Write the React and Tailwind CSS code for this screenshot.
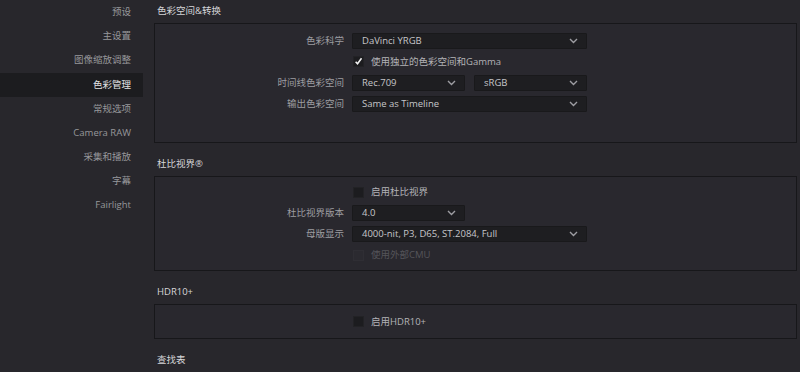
import React from 'react'

const FONT = { fontFamily: '"Open Sans", "Noto Sans CJK SC", sans-serif' }

const NAV = ['预设', '主设置', '图像缩放调整', '色彩管理', '常规选项', 'Camera RAW', '采集和播放', '字幕', 'Fairlight']

function Chevron() {
  return (
    <svg width="9" height="6" viewBox="0 0 9 6" className="shrink-0">
      <path d="M1 1 L4.5 4.5 L8 1" fill="none" stroke="#9d9da2" strokeWidth="1.4" />
    </svg>
  )
}

function Select({ value, w = 'w-[235px]' }) {
  return (
    <div className={`${w} h-[16px] flex items-center justify-between pl-[9px] pr-[8px] bg-[#1e1e21] border border-[#19191b] rounded-[1px] text-[9.5px] text-[#c6c6c9]`}>
      <span className="leading-none">{value}</span>
      <Chevron />
    </div>
  )
}

function Check({ checked, label, disabled }) {
  return (
    <div className="flex items-center h-[16px] pl-[1px]">
      <div className={`w-[11px] h-[11px] flex items-center justify-center border ${disabled ? 'bg-[#2b2a30] border-[#2f2e34]' : 'bg-[#1c1c1f] border-[#222225]'}`}>
        {checked && (
          <svg width="11" height="11" viewBox="0 0 11 11">
            <path d="M2 5.8 L4.3 8.3 L9.2 1.6" fill="none" stroke="#f2f2f2" strokeWidth="1.9" />
          </svg>
        )}
      </div>
      <span className={`ml-[7px] text-[9.5px] leading-none ${disabled ? 'text-[#55555a]' : 'text-[#b3b3b7]'}`}>{label}</span>
    </div>
  )
}

function Row({ label, children }) {
  return (
    <div className="grid grid-cols-[189px_1fr] gap-x-[8px] items-center h-[16px]">
      <div className="text-right text-[9.5px] leading-none text-[#9d9da1]">{label}</div>
      <div className="flex gap-x-[9px]">{children}</div>
    </div>
  )
}

function Title({ children, first }) {
  return (
    <div className={`${first ? 'h-[23px]' : 'mt-[5px] h-[28px]'} flex items-end pb-[6px] pl-[3px] text-[9.5px] leading-[13px] text-[#d6d6d9]`}>
      {children}
    </div>
  )
}

export default function App() {
  return (
    <div style={FONT} className="flex w-[800px] h-[372px] overflow-hidden bg-[#28272c]">
      {/* Sidebar */}
      <div className="w-[143px] shrink-0 flex flex-col">
        {NAV.map(item => (
          <div
            key={item}
            className={[
              'h-[24.2px] flex items-center justify-end pr-[12px] text-[9.5px]',
              item === '色彩管理' ? 'bg-[#1c1c1f] text-[#e4e4e6]' : 'text-[#97979b]',
            ].join(' ')}
          >
            {item}
          </div>
        ))}
      </div>

      {/* Content */}
      <div className="flex-1 pl-[11px] pr-[3px] flex flex-col">
        <Title first>色彩空间&amp;转换</Title>
        <div className="h-[121px] border border-[#17171a] bg-[#29282e] pt-[9px] flex flex-col gap-y-[5px]">
          <Row label="色彩科学"><Select value="DaVinci YRGB" /></Row>
          <Row label=""><Check checked label="使用独立的色彩空间和Gamma" /></Row>
          <Row label="时间线色彩空间">
            <Select value="Rec.709" w="w-[113px]" />
            <Select value="sRGB" w="w-[113px]" />
          </Row>
          <Row label="输出色彩空间"><Select value="Same as Timeline" /></Row>
        </div>

        <Title>杜比视界®</Title>
        <div className="h-[96px] border border-[#17171a] bg-[#29282e] pt-[7px] flex flex-col gap-y-[5px]">
          <Row label=""><Check label="启用杜比视界" /></Row>
          <Row label="杜比视界版本"><Select value="4.0" w="w-[113px]" /></Row>
          <Row label="母版显示"><Select value="4000-nit, P3, D65, ST.2084, Full" /></Row>
          <Row label=""><Check disabled label="使用外部CMU" /></Row>
        </div>

        <Title>HDR10+</Title>
        <div className="h-[35px] border border-[#17171a] bg-[#29282e] flex flex-col justify-center">
          <Row label=""><Check label="启用HDR10+" /></Row>
        </div>

        <Title>查找表</Title>
      </div>
    </div>
  )
}
